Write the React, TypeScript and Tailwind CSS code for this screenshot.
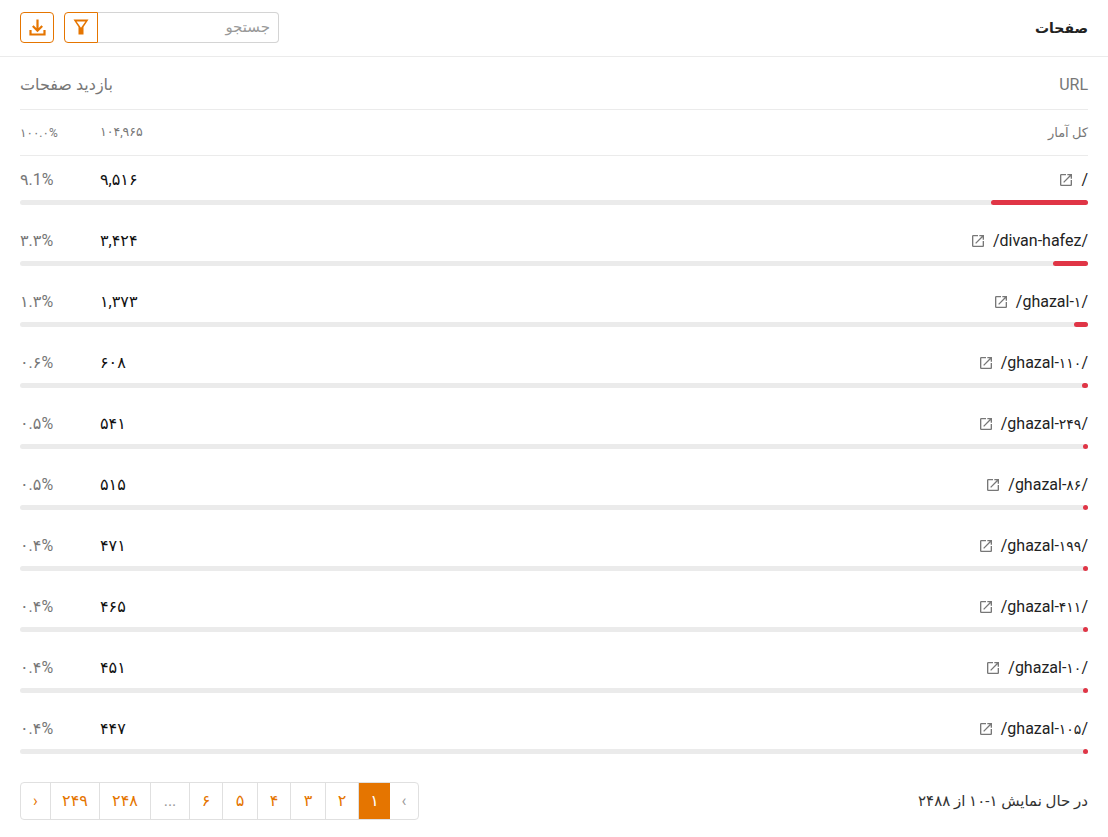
import { MdOpenInNew } from 'react-icons/md';

const rows = [
  { url: '/', count: '۹,۵۱۶', pct: '۹.1%', bar: 97 },
  { url: '/divan-hafez/', count: '۳,۴۲۴', pct: '۳.۳%', bar: 35 },
  { url: '/ghazal-', num: '۱', count: '۱,۳۷۳', pct: '۱.۳%', bar: 14 },
  { url: '/ghazal-', num: '۱۱۰', count: '۶۰۸', pct: '۰.۶%', bar: 6 },
  { url: '/ghazal-', num: '۲۴۹', count: '۵۴۱', pct: '۰.۵%', bar: 5 },
  { url: '/ghazal-', num: '۸۶', count: '۵۱۵', pct: '۰.۵%', bar: 5 },
  { url: '/ghazal-', num: '۱۹۹', count: '۴۷۱', pct: '۰.۴%', bar: 5 },
  { url: '/ghazal-', num: '۴۱۱', count: '۴۶۵', pct: '۰.۴%', bar: 5 },
  { url: '/ghazal-', num: '۱۰', count: '۴۵۱', pct: '۰.۴%', bar: 5 },
  { url: '/ghazal-', num: '۱۰۵', count: '۴۴۷', pct: '۰.۴%', bar: 5 },
];

const pages = [
  { label: '۲', width: 'w-[33px]' },
  { label: '۳', width: 'w-[35px]' },
  { label: '۴', width: 'w-[33px]' },
  { label: '۵', width: 'w-[35px]' },
  { label: '۶', width: 'w-[33px]' },
  { label: '...', width: 'w-[39px]' },
  { label: '۲۴۸', width: 'w-[51px]' },
  { label: '۲۴۹', width: 'w-[49px]' },
];

function FilterIcon() {
  return (
    <svg width="16" height="16" viewBox="0 0 16 16" fill="currentColor">
      <path fillRule="evenodd" d="M0.5 0.5H15.5L10.5 8V15.5H5.5V8ZM3.6 2.5H12.4L8 8.8Z" />
    </svg>
  );
}

function DownloadIcon() {
  return (
    <svg width="17" height="17" viewBox="0 0 17 17" fill="none" stroke="currentColor" strokeWidth="2.2">
      <path d="M8.5 0.5V11.5M3.8 7L8.5 11.7L13.2 7M1.5 11V15.5H15.5V11" />
    </svg>
  );
}

export default function App() {
  return (
    <div dir="rtl" className="w-[1108px] h-[837px] bg-white text-[#222] overflow-hidden" style={{ fontFamily: 'Roboto, "DejaVu Sans", sans-serif' }}>
      {/* Header */}
      <div className="h-[57px] border-b border-[#ebebeb] px-5 flex items-center justify-between">
        <h2 className="text-sm font-bold text-[#222]">صفحات</h2>
        <div className="flex items-center gap-2.5 mb-[2px]">
          <div className="flex items-center">
            <input
              placeholder="جستجو"
              className="w-[181px] h-[31px] border border-[#d4d4d4] border-l-0 rounded-r text-[15px] px-2 outline-none placeholder:text-[#999]"
            />
            <button className="w-[34px] h-[31px] border border-[#e57500] rounded-l text-[#e57500] flex items-center justify-center">
              <FilterIcon />
            </button>
          </div>
          <button className="w-[34px] h-[31px] border border-[#e57500] rounded text-[#e57500] flex items-center justify-center">
            <DownloadIcon />
          </button>
        </div>
      </div>

      <div className="px-5">
        {/* Columns */}
        <div className="h-[53px] pt-[3px] border-b border-[#ebebeb] flex items-center justify-between text-base text-[#777]">
          <span>URL</span>
          <span>بازدید صفحات</span>
        </div>

        {/* Totals */}
        <div className="h-[46px] border-b border-[#ebebeb] flex items-center justify-between text-[13px] text-[#777]">
          <span>کل آمار</span>
          <div dir="ltr" className="flex items-center">
            <span className="w-[80px] text-xs">۱۰۰.۰%</span>
            <span className="w-[50px] text-[12.5px]">۱۰۴,۹۶۵</span>
          </div>
        </div>

        {/* Rows */}
        {rows.map((row) => (
          <div key={row.url + (row.num ?? '')} className="h-[61px] pt-[13px]">
            <div className="h-[22px] flex items-center justify-between text-base">
              <div className="flex items-center gap-[7px]">
                <span dir="ltr">
                  {row.url}
                  {row.num && (
                    <>
                      <span className="text-sm">{row.num}</span>/
                    </>
                  )}
                </span>
                <MdOpenInNew size={16} className="text-[#777]" />
              </div>
              <div dir="ltr" className="flex items-center">
                <span className="w-[80px] text-[#777]">{row.pct}</span>
                <span className="w-[50px] text-[#111]">{row.count}</span>
              </div>
            </div>
            <div className="mt-[9px] h-[5px] rounded-full bg-[#ebebeb]">
              <div className="h-full rounded-full bg-[#e03546]" style={{ width: row.bar }} />
            </div>
          </div>
        ))}

        {/* Footer */}
        <div className="mt-4 flex items-center justify-between">
          <span className="text-[15px] text-[#333]">در حال نمایش ۱-۱۰ از ۲۴۸۸</span>
          <div className="h-[38px] flex border border-[#e0e0e0] rounded text-base text-[#e57500]">
            <span className="w-[28px] flex items-center justify-center text-[#999]">›</span>
            <span className="w-[31px] flex items-center justify-center bg-[#e57500] text-white">۱</span>
            {pages.map((p) => (
              <span
                key={p.label}
                className={`${p.width} flex items-center justify-center border-r border-[#e0e0e0] ${p.label === '...' ? 'text-[#999]' : ''}`}
              >
                {p.label}
              </span>
            ))}
            <span className="w-[30px] flex items-center justify-center border-r border-[#e0e0e0]">‹</span>
          </div>
        </div>
      </div>
    </div>
  );
}
